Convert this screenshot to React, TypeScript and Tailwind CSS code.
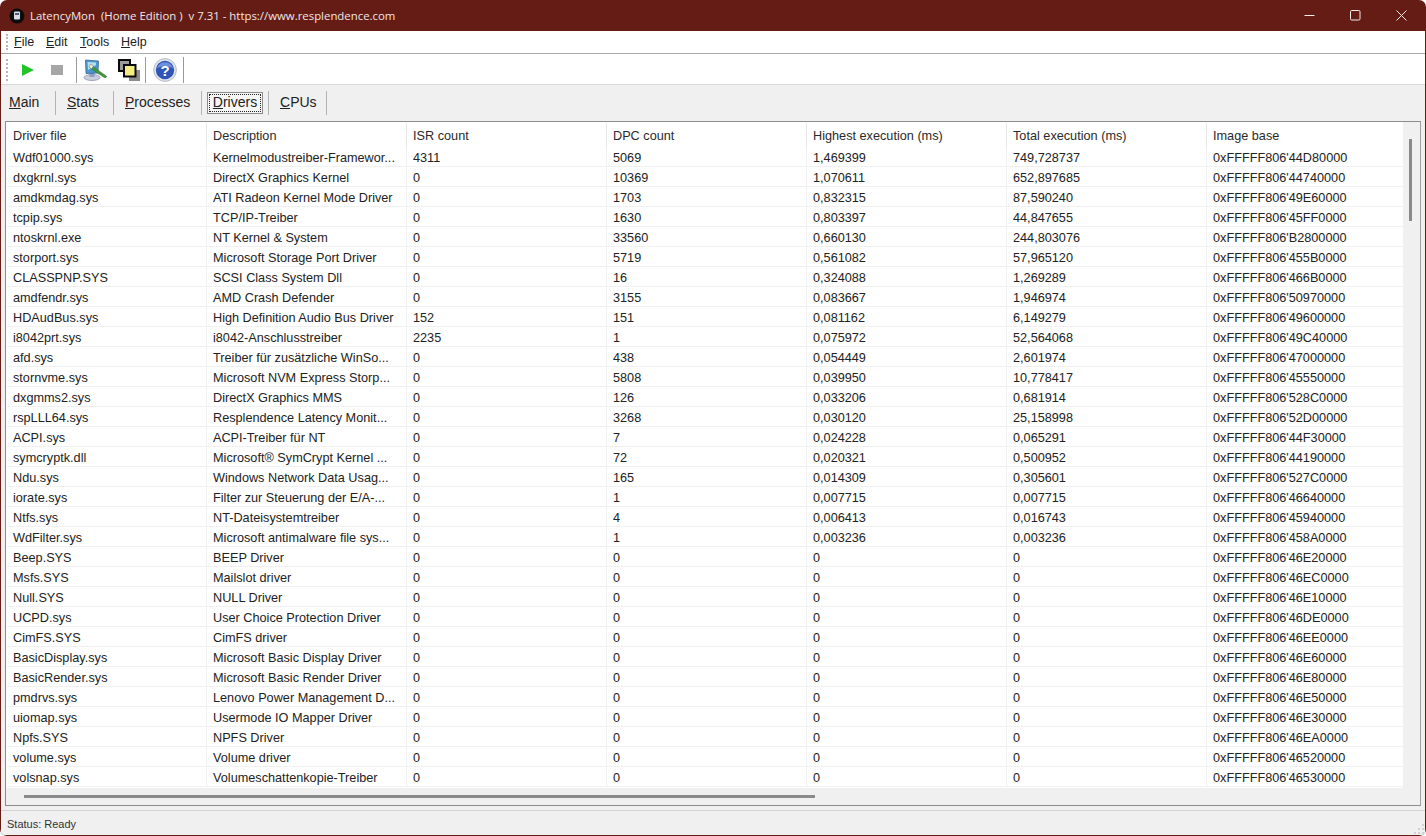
import React from "react";

const rows: string[][] = [
  ["Wdf01000.sys","Kernelmodustreiber-Framewor...","4311","5069","1,469399","749,728737","0xFFFFF806'44D80000"],
  ["dxgkrnl.sys","DirectX Graphics Kernel","0","10369","1,070611","652,897685","0xFFFFF806'44740000"],
  ["amdkmdag.sys","ATI Radeon Kernel Mode Driver","0","1703","0,832315","87,590240","0xFFFFF806'49E60000"],
  ["tcpip.sys","TCP/IP-Treiber","0","1630","0,803397","44,847655","0xFFFFF806'45FF0000"],
  ["ntoskrnl.exe","NT Kernel & System","0","33560","0,660130","244,803076","0xFFFFF806'B2800000"],
  ["storport.sys","Microsoft Storage Port Driver","0","5719","0,561082","57,965120","0xFFFFF806'455B0000"],
  ["CLASSPNP.SYS","SCSI Class System Dll","0","16","0,324088","1,269289","0xFFFFF806'466B0000"],
  ["amdfendr.sys","AMD Crash Defender","0","3155","0,083667","1,946974","0xFFFFF806'50970000"],
  ["HDAudBus.sys","High Definition Audio Bus Driver","152","151","0,081162","6,149279","0xFFFFF806'49600000"],
  ["i8042prt.sys","i8042-Anschlusstreiber","2235","1","0,075972","52,564068","0xFFFFF806'49C40000"],
  ["afd.sys","Treiber für zusätzliche WinSo...","0","438","0,054449","2,601974","0xFFFFF806'47000000"],
  ["stornvme.sys","Microsoft NVM Express Storp...","0","5808","0,039950","10,778417","0xFFFFF806'45550000"],
  ["dxgmms2.sys","DirectX Graphics MMS","0","126","0,033206","0,681914","0xFFFFF806'528C0000"],
  ["rspLLL64.sys","Resplendence Latency Monit...","0","3268","0,030120","25,158998","0xFFFFF806'52D00000"],
  ["ACPI.sys","ACPI-Treiber für NT","0","7","0,024228","0,065291","0xFFFFF806'44F30000"],
  ["symcryptk.dll","Microsoft® SymCrypt Kernel ...","0","72","0,020321","0,500952","0xFFFFF806'44190000"],
  ["Ndu.sys","Windows Network Data Usag...","0","165","0,014309","0,305601","0xFFFFF806'527C0000"],
  ["iorate.sys","Filter zur Steuerung der E/A-...","0","1","0,007715","0,007715","0xFFFFF806'46640000"],
  ["Ntfs.sys","NT-Dateisystemtreiber","0","4","0,006413","0,016743","0xFFFFF806'45940000"],
  ["WdFilter.sys","Microsoft antimalware file sys...","0","1","0,003236","0,003236","0xFFFFF806'458A0000"],
  ["Beep.SYS","BEEP Driver","0","0","0","0","0xFFFFF806'46E20000"],
  ["Msfs.SYS","Mailslot driver","0","0","0","0","0xFFFFF806'46EC0000"],
  ["Null.SYS","NULL Driver","0","0","0","0","0xFFFFF806'46E10000"],
  ["UCPD.sys","User Choice Protection Driver","0","0","0","0","0xFFFFF806'46DE0000"],
  ["CimFS.SYS","CimFS driver","0","0","0","0","0xFFFFF806'46EE0000"],
  ["BasicDisplay.sys","Microsoft Basic Display Driver","0","0","0","0","0xFFFFF806'46E60000"],
  ["BasicRender.sys","Microsoft Basic Render Driver","0","0","0","0","0xFFFFF806'46E80000"],
  ["pmdrvs.sys","Lenovo Power Management D...","0","0","0","0","0xFFFFF806'46E50000"],
  ["uiomap.sys","Usermode IO Mapper Driver","0","0","0","0","0xFFFFF806'46E30000"],
  ["Npfs.SYS","NPFS Driver","0","0","0","0","0xFFFFF806'46EA0000"],
  ["volume.sys","Volume driver","0","0","0","0","0xFFFFF806'46520000"],
  ["volsnap.sys","Volumeschattenkopie-Treiber","0","0","0","0","0xFFFFF806'46530000"],
];
const headers = ["Driver file","Description","ISR count","DPC count","Highest execution (ms)","Total execution (ms)","Image base"];

const Sep = () => <div className="w-px h-[26px] bg-[#9a9a9a] shrink-0" />;
const TabSep = () => <div className="w-px h-[24px] bg-[#b4b4b4] shrink-0" />;

function AppIcon() {
  return (
    <svg width="16" height="16" viewBox="0 0 16 16" className="shrink-0">
      <circle cx="8" cy="8" r="7.5" fill="#0c0c0c" />
      <rect x="5" y="3.5" width="6" height="8" rx="1" fill="#d8dde6" />
      <rect x="6" y="5" width="4" height="2" fill="#4a5a78" />
    </svg>
  );
}

function MonitorIcon() {
  return (
    <svg width="25" height="22" viewBox="0 0 25 22">
      <ellipse cx="9" cy="18.5" rx="8" ry="3" fill="#c9cedd" stroke="#8088a6" strokeWidth="0.7" />
      <rect x="6.5" y="13" width="5" height="5" fill="#8fa0c4" />
      <path d="M2.5 1 L15.5 2 L15 14 L3 14.5 Z" fill="#4a97d4" stroke="#3f648f" strokeWidth="0.8" />
      <path d="M4.5 3 L13 3.5 L13 6 L5 11 Z" fill="#b4e0ee" />
      <path d="M9 7 L24 17.5 L22 19 L7.5 9.5 Z" fill="#3f9a3a" stroke="#2f6a2c" strokeWidth="0.5" />
      <path d="M7.5 5 L10.5 7 L8.5 10 L6 8 Z" fill="#f0eecc" stroke="#666" strokeWidth="0.5" />
    </svg>
  );
}

function LayersIcon() {
  return (
    <svg width="22" height="22" viewBox="0 0 22 22">
      <rect x="1" y="1" width="11" height="11" fill="#9a9a9a" stroke="#0a0a0a" strokeWidth="2" />
      <rect x="11" y="11" width="11" height="11" fill="#8c8c8c" />
      <rect x="6" y="6" width="11.5" height="11.5" fill="#f4ee80" stroke="#0a0a0a" strokeWidth="2" />
    </svg>
  );
}

function HelpIcon() {
  return (
    <svg width="24" height="24" viewBox="0 0 24 24">
      <circle cx="12" cy="12" r="11.4" fill="#dfe3ea" stroke="#a9aebb" strokeWidth="0.8" />
      <circle cx="12" cy="12" r="9.2" fill="#2f55b8" />
      <path d="M4 10 A8.5 8.5 0 0 1 20 10 Q12 6.5 4 10 Z" fill="#6f8fdc" />
      <text x="12" y="17.5" textAnchor="middle" fontSize="15" fontWeight="700" fill="#ffffff" fontFamily="'Liberation Sans', sans-serif">?</text>
    </svg>
  );
}

function Grip() {
  return <div className="w-[2px] self-stretch my-[3px] ml-[5px] border-l-2 border-dotted border-[#b8b8b8] shrink-0" />;
}

export default function App() {
  return (
    <div className="relative w-[1426px] h-[836px] overflow-hidden flex flex-col bg-[#641c14] px-px pb-px rounded-[7px] font-['Liberation_Sans',sans-serif] text-[#222222]">
      {/* Title bar */}
      <div className="h-[31px] shrink-0 flex items-center text-white">
        <div className="ml-[8px]"><AppIcon /></div>
        <span className="ml-[5px] text-[11.4px] whitespace-pre font-['Open_Sans',sans-serif] text-[#f2e6e4]">LatencyMon  (Home Edition )  v 7.31 - https://www.resplendence.com</span>
        <div className="ml-auto flex items-center">
          <div className="w-[46px] flex justify-center">
            <svg width="11" height="11" viewBox="0 0 11 11"><path d="M0.5 5.5H10.5" stroke="#f4ecea" strokeWidth="1" /></svg>
          </div>
          <div className="w-[46px] flex justify-center">
            <svg width="11" height="11" viewBox="0 0 11 11"><rect x="0.5" y="0.5" width="9.5" height="9.5" rx="1.2" fill="none" stroke="#f4ecea" strokeWidth="1" /></svg>
          </div>
          <div className="w-[46px] mr-[1px] flex justify-center">
            <svg width="11" height="11" viewBox="0 0 11 11"><path d="M0.5 0.5L10.5 10.5M10.5 0.5L0.5 10.5" stroke="#f4ecea" strokeWidth="1" /></svg>
          </div>
        </div>
      </div>

      <div className="relative flex-1 flex flex-col bg-[#f0f0f0] min-h-0">
        {/* Menu */}
        <div className="h-[23px] shrink-0 bg-white border-b border-[#a8a8a8] flex items-center">
          <Grip />
          <div className="flex text-[12.5px] ml-[6px]">
            <span className="w-[32px]"><u>F</u>ile</span>
            <span className="w-[34px]"><u>E</u>dit</span>
            <span className="w-[41px]"><u>T</u>ools</span>
            <span><u>H</u>elp</span>
          </div>
        </div>
        {/* Toolbar */}
        <div className="h-[31px] shrink-0 bg-white border-b border-[#d9d9d9] flex items-center pt-[2px]">
          <Grip />
          <div className="w-[35px] flex justify-center ml-[1px]">
            <svg width="14" height="14" viewBox="0 0 14 14" className="ml-[3px]"><path d="M1 1 L13 7 L1 13 Z" fill="#22c42a" /></svg>
          </div>
          <div className="ml-[1px] w-[23px] flex justify-center">
            <div className="w-[12px] h-[10px] bg-[#a6a6a6]" />
          </div>
          <div className="ml-[8px]"><Sep /></div>
          <div className="w-[36px] flex justify-center"><MonitorIcon /></div>
          <div className="ml-[3px] w-[26px] flex justify-center"><LayersIcon /></div>
          <div className="ml-[3px]"><Sep /></div>
          <div className="w-[37px] flex justify-center"><HelpIcon /></div>
          <Sep />
        </div>
        {/* Tabs */}
        <div className="h-[36px] shrink-0 flex items-center text-[14px] pb-[1px]">
          <span className="ml-[8px] w-[46px]"><u>M</u>ain</span>
          <TabSep />
          <span className="ml-[11px] w-[46px]"><u>S</u>tats</span>
          <TabSep />
          <span className="ml-[11px] w-[76px]"><u>P</u>rocesses</span>
          <TabSep />
          <div className="ml-[5px] w-[56px] h-[22px] p-px bg-[#f6f6f6] border border-[#8c8c8c] flex">
            <span className="flex-1 flex items-center justify-center border border-dotted border-[#222222]"><u>D</u>rivers</span>
          </div>
          <div className="ml-[5px]"><TabSep /></div>
          <span className="ml-[11px] w-[46px]"><u>C</u>PUs</span>
          <TabSep />
        </div>
        {/* List */}
        <div className="h-[685px] mx-[4px] shrink-0 border border-[#8c8c8c] border-r-[#a0a0a0] bg-white flex text-[12.7px]">
          <div className="flex-1 min-w-0 flex flex-col">
            <div className="flex-1 min-h-0 pl-px pt-px">
              <div className="flex h-[24px] items-center text-[#2a2a2a]">
                {headers.map((h, i) => (
                  <div key={h} className={"h-full flex items-center pl-[6px] pt-[4px] border-r border-[#e8e8e8] " + (i === 6 ? "w-[196px] border-r-0" : "w-[200px]")}>{h}</div>
                ))}
              </div>
              {rows.map((r) => (
                <div key={r[0]} className="flex h-[20px] border-b border-[#f0f0f0]">
                  {r.map((c, i) => (
                    <div key={i} className={"h-full flex items-center pl-[6px] pt-[4px] whitespace-nowrap overflow-hidden border-r border-[#f0f0f0] " + (i === 6 ? "w-[196px] border-r-0" : "w-[200px]")}>{c}</div>
                  ))}
                </div>
              ))}
            </div>
            <div className="h-[17px] shrink-0 bg-[#f0f0f0] flex items-center">
              <div className="ml-[18px] w-[791px] h-[3px] bg-[#8a8a8a]" />
            </div>
          </div>
          <div className="w-[17px] shrink-0 bg-[#f0f0f0]">
            <div className="ml-[6px] mt-[17px] w-[3px] h-[82px] bg-[#8a8a8a]" />
          </div>
        </div>
        {/* Status */}
        <div className="mt-[4px] flex-1 border-t border-[#d4d4d4] flex items-center pl-[6px] pt-[2px] text-[11px] text-[#333333]">Status: Ready</div>
        <svg width="14" height="12" viewBox="0 0 14 12" className="absolute right-0 bottom-0">
          <g fill="#d2d2d2">
            <rect x="11" y="1" width="2" height="2" />
            <rect x="7" y="5" width="2" height="2" />
            <rect x="11" y="5" width="2" height="2" />
            <rect x="3" y="9" width="2" height="2" />
            <rect x="7" y="9" width="2" height="2" />
            <rect x="11" y="9" width="2" height="2" />
          </g>
        </svg>
      </div>
    </div>
  );
}
